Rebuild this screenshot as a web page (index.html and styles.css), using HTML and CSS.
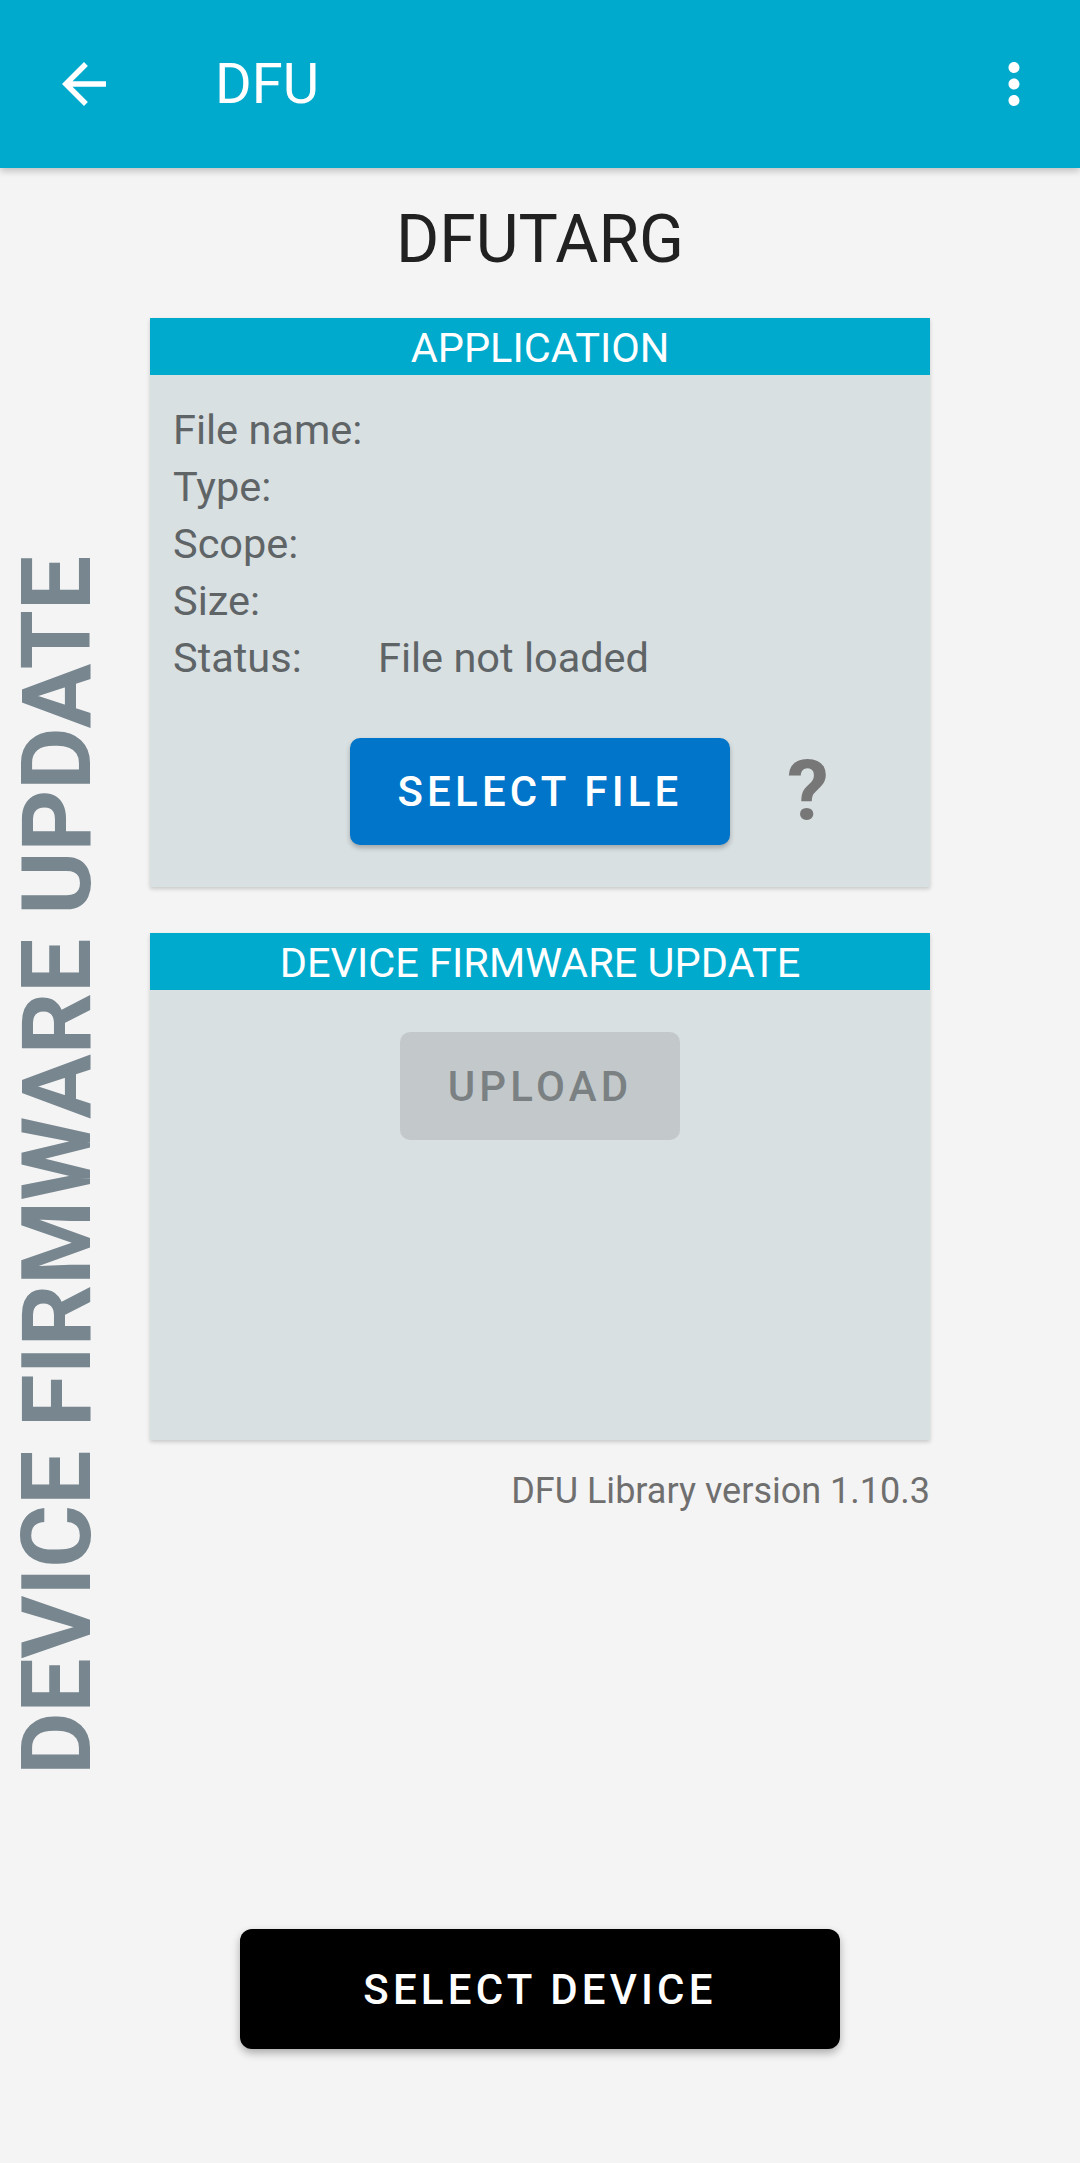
FILE: index.html
```html
<!doctype html>
<html>
  <head>
    <meta http-equiv="Content-Type" content="text/html; charset=UTF-8" />
    <title>DFU</title>
    <link rel="stylesheet" href="styles.css">
  </head>
  <body>
    <div id="app">
      <header class="appbar">
        <svg class="icon icon-back" viewBox="0 0 24 24"><path d="M20 11H7.83l5.59-5.59L12 4l-8 8 8 8 1.41-1.41L7.83 13H20v-2z"/></svg>
        <span class="appbar-title">DFU</span>
        <svg class="icon icon-more" viewBox="0 0 24 24"><path d="M12 8c1.1 0 2-.9 2-2s-.9-2-2-2-2 .9-2 2 .9 2 2 2zm0 2c-1.1 0-2 .9-2 2s.9 2 2 2 2-.9 2-2-.9-2-2-2zm0 6c-1.1 0-2 .9-2 2s.9 2 2 2 2-.9 2-2-.9-2-2-2z"/></svg>
      </header>
      <main class="content">
        <div class="side-label">DEVICE FIRMWARE UPDATE</div>
        <div class="column">
          <h1 class="device-name">DFUTARG</h1>

          <section class="card">
            <div class="card-header">APPLICATION</div>
            <div class="card-body">
              <div class="info-list">
                <div class="info-row"><span class="info-label">File name:</span><span class="info-value"></span></div>
                <div class="info-row"><span class="info-label">Type:</span><span class="info-value"></span></div>
                <div class="info-row"><span class="info-label">Scope:</span><span class="info-value"></span></div>
                <div class="info-row"><span class="info-label">Size:</span><span class="info-value"></span></div>
                <div class="info-row"><span class="info-label">Status:</span><span class="info-value">File not loaded</span></div>
              </div>
              <div class="file-actions">
                <button class="btn btn-primary">SELECT FILE</button>
                <span class="help">?</span>
              </div>
            </div>
          </section>

          <section class="card card-dfu">
            <div class="card-header">DEVICE FIRMWARE UPDATE</div>
            <div class="card-body">
              <button class="btn btn-disabled">UPLOAD</button>
            </div>
          </section>

          <p class="version">DFU Library version 1.10.3</p>

          <button class="btn btn-device">SELECT DEVICE</button>
        </div>
      </main>
    </div>
  </body>
</html>
```

FILE: styles.css
```css
* {
  box-sizing: border-box;
}
body {
  margin: 0;
  font-family: Roboto, "Liberation Sans", sans-serif;
  background-color: #f4f4f4;
}
#app {
  width: 1080px;
  height: 2163px;
  display: flex;
  flex-direction: column;
}

/* top bar */
.appbar {
  position: relative;
  z-index: 1;
  height: 168px;
  flex-shrink: 0;
  display: flex;
  align-items: center;
  background-color: #00aacd;
  color: #fff;
  box-shadow: 0 3px 7px rgba(0, 0, 0, 0.22);
}
.icon {
  width: 66px;
  height: 66px;
  fill: #fff;
}
.icon-back {
  margin-left: 51px;
}
.appbar-title {
  margin-left: 98px;
  font-size: 56px;
}
.icon-more {
  margin-left: auto;
  margin-right: 33px;
}

/* page body */
.content {
  flex: 1;
  display: grid;
  grid-template-columns: 150px 780px 150px;
}
.side-label {
  grid-column: 1;
  grid-row: 1;
  align-self: center;
  justify-self: start;
  margin-left: 9px;
  writing-mode: vertical-rl;
  transform: rotate(180deg);
  white-space: nowrap;
  font-size: 96px;
  font-weight: 700;
  line-height: 96px;
  color: #78868f;
}
.column {
  grid-column: 2;
  grid-row: 1;
  display: flex;
  flex-direction: column;
  padding: 33px 0 114px;
}
.device-name {
  margin: 0;
  text-align: center;
  font-size: 66px;
  font-weight: 400;
  line-height: 77px;
  color: #212121;
}

/* cards */
.card {
  margin-top: 40px;
  background-color: #d9e0e2;
  box-shadow: 0 2px 4px rgba(0, 0, 0, 0.18);
}
.card-dfu {
  margin-top: 46px;
}
.card-header {
  height: 57px;
  padding-top: 3px;
  line-height: 54px;
  text-align: center;
  font-size: 41.5px;
  color: #fff;
  background-color: #00aacd;
}
.card-body {
  padding: 26px 0 42px;
}
.card-dfu .card-body {
  height: 450px;
  padding-top: 42px;
  display: flex;
  flex-direction: column;
  align-items: center;
}
.info-list {
  padding-left: 23px;
}
.info-row {
  display: flex;
  font-size: 41.5px;
  line-height: 57px;
  color: #5f6467;
}
.info-label {
  width: 205px;
}
.file-actions {
  display: grid;
  grid-template-columns: 1fr 380px 1fr;
  align-items: center;
  margin-top: 52px;
}
.help {
  justify-self: start;
  margin-left: 57px;
  font-size: 84px;
  font-weight: 700;
  line-height: 1;
  color: #777;
}

/* buttons */
.btn {
  border: none;
  border-radius: 10px;
  font-family: Roboto, "Liberation Sans", sans-serif;
  font-size: 42px;
  font-weight: 500;
  letter-spacing: 0.1em;
  padding: 0;
}
.btn-primary {
  grid-column: 2;
  height: 107px;
  background-color: #0075c9;
  color: #fff;
  box-shadow: 0 3px 5px rgba(0, 0, 0, 0.25);
}
.btn-disabled {
  width: 280px;
  height: 108px;
  background-color: #c3c9cb;
  color: #7b8183;
}
.btn-device {
  margin-top: auto;
  align-self: center;
  width: 600px;
  height: 120px;
  border-radius: 12px;
  background-color: #000;
  color: #fff;
  box-shadow: 0 4px 8px rgba(0, 0, 0, 0.3);
}

.version {
  margin: 31px 0 0;
  text-align: right;
  font-size: 36px;
  line-height: 41px;
  color: #6f6f6f;
}
```
